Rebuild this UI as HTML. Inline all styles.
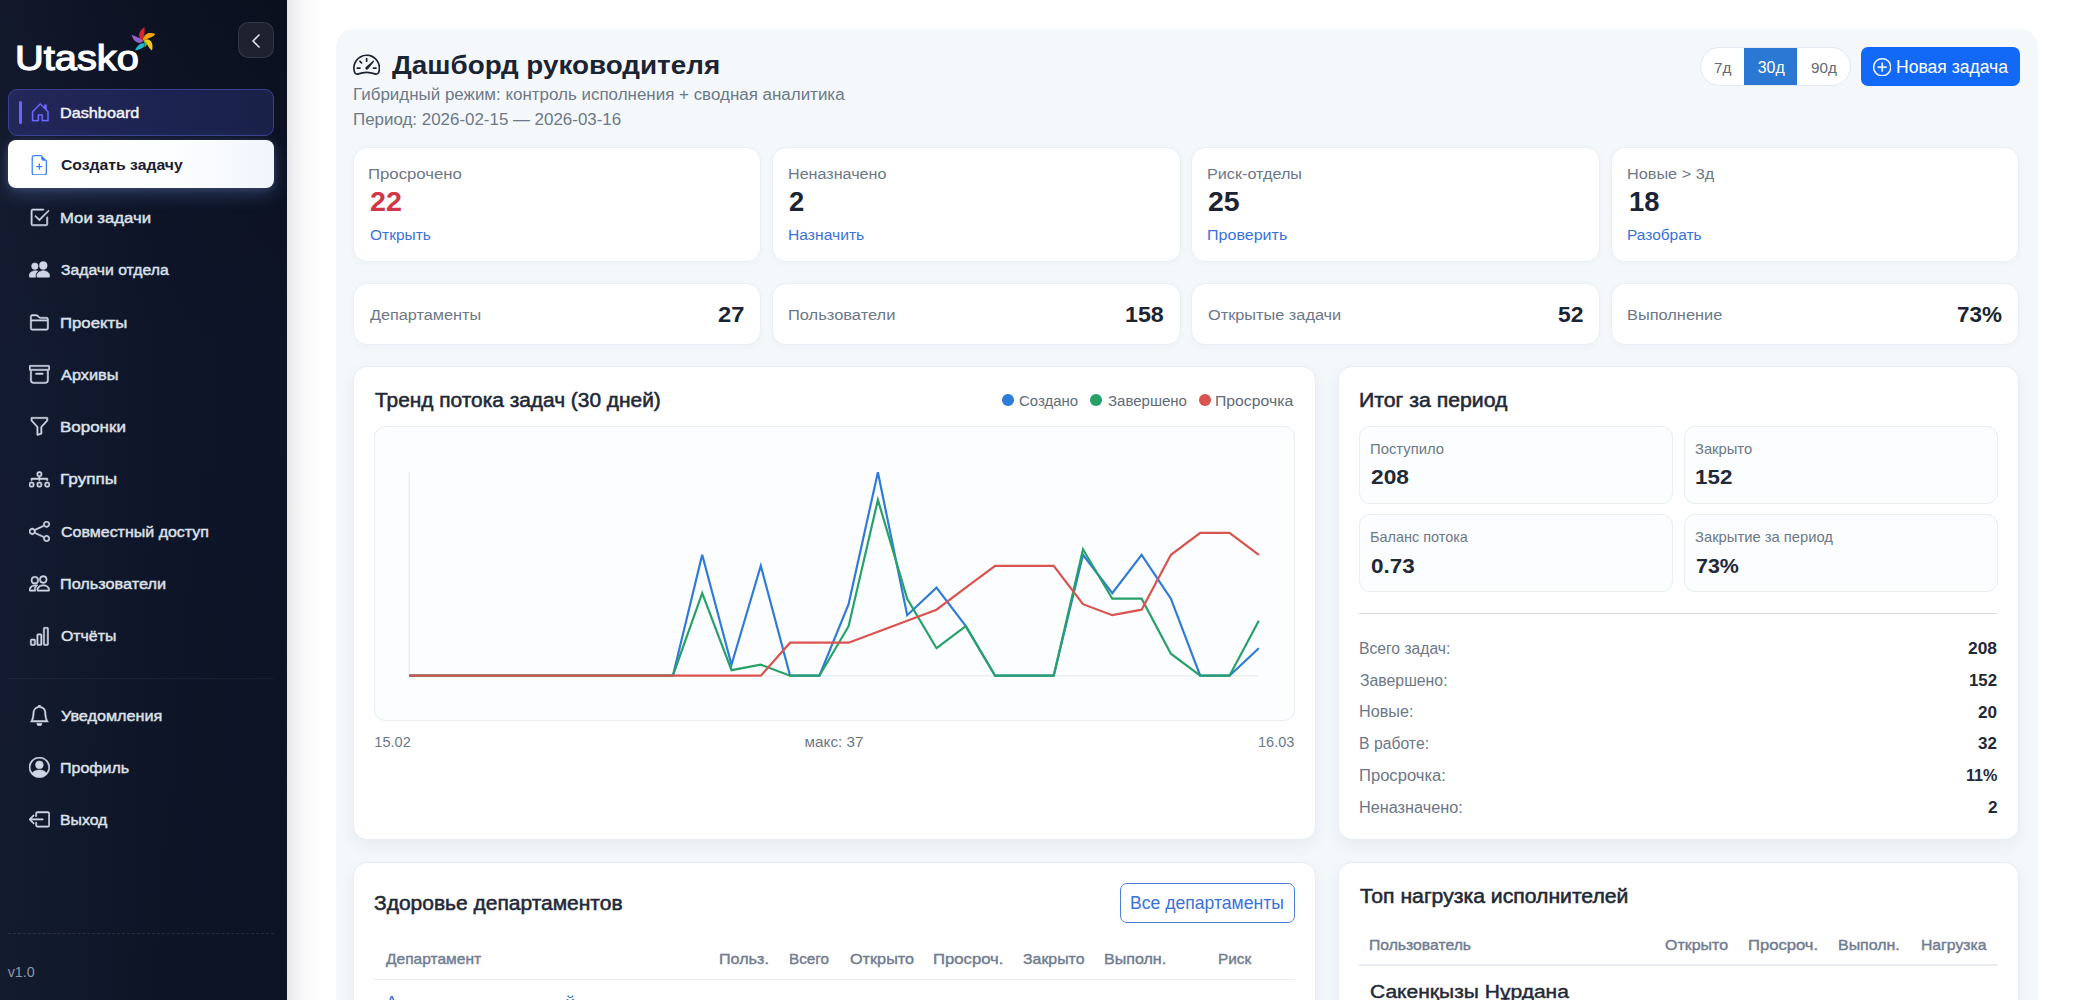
<!DOCTYPE html>
<html lang="ru"><head><meta charset="utf-8"><title>Utasko</title>
<style>
html,body{margin:0;padding:0}
body{width:2093px;height:1000px;overflow:hidden;position:relative;background:#fff;font-family:"Liberation Sans",sans-serif}
.b{position:absolute;box-sizing:border-box;display:block}
.t{position:absolute;white-space:pre;line-height:1;display:block;transform-origin:0 0}
#root{position:absolute;left:0;top:0;width:2093px;height:1000px;overflow:hidden;background:#fff}
</style></head><body>
<div id="root">
<div class="b" style="left:287px;top:0px;width:40px;height:1000px;background:linear-gradient(90deg,rgba(20,25,45,.11) 0,rgba(20,25,45,.06) 8px,rgba(20,25,45,.02) 20px,rgba(20,25,45,0) 34px)"></div>
<div class="b" style="left:0px;top:0px;width:287px;height:1000px;background:linear-gradient(90deg,rgba(44,54,84,.22) 0%,rgba(30,40,70,.08) 55%,rgba(10,14,28,.0) 100%),linear-gradient(180deg,#0b101f 0%,#0d1427 35%,#0c1324 100%)"></div>
<span class="t" style="left:15.36px;top:41.00px;font-size:35.6px;font-weight:400;color:#fff;transform:scaleX(1.1176);-webkit-text-stroke:1.25px #fff;">Utasko</span>
<svg class="b" style="left:129.2px;top:26px" width="28" height="28" viewBox="-14 -14 28 28">
<path d="M0.8 0.6 C2.8 1 4.2 2.2 4 4.2 C3.8 5.6 2.6 6.6 1.2 7 C2 4.6 1.6 2.4 0.2 1Z" fill="#4cb848"/>
<path d="M1.6 3.4 C2 6 0 8 -3 9 C-5 9.8 -6.5 10.3 -8 10.3 C-7 8 -5 5.4 -3 4.1 C-1.5 3.1 0 2.9 1.6 3.4Z" fill="#22b8d6"/>
<path d="M0.4 0.8 C-1 2.8 -3.5 3.6 -6 2.3 C-8.5 1 -10.6 -2 -11.4 -5.1 C-9 -4.9 -6 -3.3 -3.5 -1.9 C-2 -1.1 -0.8 -0.4 0.4 0.8Z" fill="#9560c8"/>
<path d="M0.4 0.4 C-3.4 -0.6 -4.9 -4.8 -3.2 -8 C-1.8 -10.4 -0.2 -12 1.5 -12.7 C1.9 -9 1.3 -4 0.4 0.4Z" fill="#d9232e"/>
<path d="M0 0.2 C0.4 -3.4 3 -6.7 6 -7 C8 -7.2 10.6 -6.9 12.1 -6.1 C11.8 -4.4 9 -2.9 6.5 -1.9 C4 -0.9 2 -0.2 0 0.2Z" fill="#f7a30c"/>
<path d="M0.6 0 C4 -1.6 7.6 -0.6 8.9 3 C9.7 5.5 9.7 8 9 10.3 C7 9.5 5.5 7 4.5 5 C3.5 3 2.2 1.2 0.6 0Z" fill="#f5c518"/>
</svg>
<div class="b" style="left:238px;top:22px;width:36px;height:36px;border-radius:10px;background:rgba(255,255,255,.07);border:1px solid rgba(255,255,255,.10)"></div>
<svg class="b" style="left:247.90px;top:33.00px;stroke:#e6eaf2;stroke-width:.7" width="16" height="16" viewBox="0 0 16 16" fill="#e6eaf2"><path fill-rule="evenodd" d="M11.354 1.646a.5.5 0 0 1 0 .708L5.707 8l5.647 5.646a.5.5 0 0 1-.708.708l-6-6a.5.5 0 0 1 0-.708l6-6a.5.5 0 0 1 .708 0z"/></svg>
<div class="b" style="left:8px;top:88.5px;width:266px;height:47px;border-radius:9px;background:linear-gradient(90deg,#23275a 0%,#1c2350 60%,#1a2148 100%);border:1px solid #3a3f8f"></div>
<div class="b" style="left:18.5px;top:100.5px;width:3.5px;height:23.5px;border-radius:2px;background:#6c63ff"></div>
<svg class="b" style="left:29.60px;top:101.90px;stroke:#6f68ff;stroke-width:.2" width="20.6" height="20.6" viewBox="0 0 16 16" fill="#6f68ff"><path d="M8.354 1.146a.5.5 0 0 0-.708 0l-6 6A.5.5 0 0 0 1.5 7.5v7a.5.5 0 0 0 .5.5h4.5a.5.5 0 0 0 .5-.5v-4h2v4a.5.5 0 0 0 .5.5H14a.5.5 0 0 0 .5-.5v-7a.5.5 0 0 0-.146-.354L13 5.793V2.5a.5.5 0 0 0-.5-.5h-1a.5.5 0 0 0-.5.5v1.293L8.354 1.146ZM2.5 14V7.707l5.5-5.5 5.5 5.5V14H10v-4a.5.5 0 0 0-.5-.5h-3a.5.5 0 0 0-.5.5v4H2.5Z"/></svg>
<span class="t" style="left:60.45px;top:105.00px;font-size:15.4px;font-weight:400;color:#f1f3f9;transform:scaleX(1.054);-webkit-text-stroke:.45px #f1f3f9;">Dashboard</span>
<div class="b" style="left:8px;top:140.2px;width:266px;height:47.9px;border-radius:8px;background:linear-gradient(90deg,#ffffff 0%,#fdfeff 60%,#f1f5fd 100%);box-shadow:0 6px 18px rgba(130,165,255,.26),0 1px 6px rgba(170,195,255,.16)"></div>
<svg class="b" style="left:29.30px;top:154.50px;" width="20.6" height="20.6" viewBox="0 0 16 16" fill="#3b82f6"><path d="M8 6.5a.5.5 0 0 1 .5.5v1.5H10a.5.5 0 0 1 0 1H8.5V11a.5.5 0 0 1-1 0V9.5H6a.5.5 0 0 1 0-1h1.5V7a.5.5 0 0 1 .5-.5z"/><path d="M14 4.5V14a2 2 0 0 1-2 2H4a2 2 0 0 1-2-2V2a2 2 0 0 1 2-2h5.5L14 4.5zm-3 0A1.5 1.5 0 0 1 9.5 3V1H4a1 1 0 0 0-1 1v12a1 1 0 0 0 1 1h8a1 1 0 0 0 1-1V4.5h-2z"/></svg>
<span class="t" style="left:61.10px;top:157.00px;font-size:15.4px;font-weight:700;color:#1a2030;transform:scaleX(1.0225);">Создать задачу</span>
<svg class="b" style="left:29.20px;top:207.10px;stroke:#cfd5e3;stroke-width:.42" width="20.8" height="20.8" viewBox="0 0 16 16" fill="#cfd5e3"><path d="M3 14.5A1.5 1.5 0 0 1 1.5 13V3A1.5 1.5 0 0 1 3 1.5h8a.5.5 0 0 1 0 1H3a.5.5 0 0 0-.5.5v10a.5.5 0 0 0 .5.5h10a.5.5 0 0 0 .5-.5V8a.5.5 0 0 1 1 0v5a1.5 1.5 0 0 1-1.5 1.5H3z"/><path d="m8.354 10.354 7-7a.5.5 0 0 0-.708-.708L8 9.293 5.354 6.646a.5.5 0 1 0-.708.708l3 3a.5.5 0 0 0 .708 0z"/></svg>
<span class="t" style="left:60.21px;top:210.00px;font-size:15.4px;font-weight:400;color:#dde1ea;transform:scaleX(1.0855);-webkit-text-stroke:.45px #dde1ea;">Мои задачи</span>
<svg class="b" style="left:29.20px;top:259.20px;stroke:#cfd5e3;stroke-width:.42" width="20.8" height="20.8" viewBox="0 0 16 16" fill="#cfd5e3"><path d="M7 14s-1 0-1-1 1-4 5-4 5 3 5 4-1 1-1 1H7Zm4-6a3 3 0 1 0 0-6 3 3 0 0 0 0 6Zm-5.784 6A2.238 2.238 0 0 1 5 13c0-1.355.68-2.75 1.936-3.72A6.325 6.325 0 0 0 5 9c-4 0-5 3-5 4s1 1 1 1h4.216ZM4.5 8a2.5 2.5 0 1 0 0-5 2.5 2.5 0 0 0 0 5Z"/></svg>
<span class="t" style="left:61.30px;top:262.00px;font-size:15.4px;font-weight:400;color:#dde1ea;transform:scaleX(1.0225);-webkit-text-stroke:.45px #dde1ea;">Задачи отдела</span>
<svg class="b" style="left:29.20px;top:311.60px;stroke:#cfd5e3;stroke-width:.42" width="20.8" height="20.8" viewBox="0 0 16 16" fill="#cfd5e3"><path d="M1 3.5A1.5 1.5 0 0 1 2.5 2h2.764c.958 0 1.76.56 2.311 1.184C7.985 3.648 8.48 4 9 4h4.5A1.5 1.5 0 0 1 15 5.5v7a1.5 1.5 0 0 1-1.5 1.5h-11A1.5 1.5 0 0 1 1 12.5v-9zM2.5 3a.5.5 0 0 0-.5.5V6h12v-.5a.5.5 0 0 0-.5-.5H9c-.964 0-1.71-.629-2.174-1.154C6.374 3.334 5.82 3 5.264 3H2.5zM14 7H2v5.5a.5.5 0 0 0 .5.5h11a.5.5 0 0 0 .5-.5V7z"/></svg>
<span class="t" style="left:60.21px;top:315.00px;font-size:15.4px;font-weight:400;color:#dde1ea;transform:scaleX(1.089);-webkit-text-stroke:.45px #dde1ea;">Проекты</span>
<svg class="b" style="left:29.20px;top:363.90px;stroke:#cfd5e3;stroke-width:.42" width="20.8" height="20.8" viewBox="0 0 16 16" fill="#cfd5e3"><path d="M0 2a1 1 0 0 1 1-1h14a1 1 0 0 1 1 1v2a1 1 0 0 1-1 1v7.5a2.5 2.5 0 0 1-2.5 2.5h-9A2.5 2.5 0 0 1 1 12.5V5a1 1 0 0 1-1-1V2zm2 3v7.5A1.5 1.5 0 0 0 3.5 14h9a1.5 1.5 0 0 0 1.5-1.5V5H2zm13-3H1v2h14V2zM5 7.5a.5.5 0 0 1 .5-.5h5a.5.5 0 0 1 0 1h-5a.5.5 0 0 1-.5-.5z"/></svg>
<span class="t" style="left:61.30px;top:367.00px;font-size:15.4px;font-weight:400;color:#dde1ea;transform:scaleX(1.061);-webkit-text-stroke:.45px #dde1ea;">Архивы</span>
<svg class="b" style="left:29.20px;top:416.20px;stroke:#cfd5e3;stroke-width:.42" width="20.8" height="20.8" viewBox="0 0 16 16" fill="#cfd5e3"><path d="M1.5 1.5A.5.5 0 0 1 2 1h12a.5.5 0 0 1 .5.5v2a.5.5 0 0 1-.128.334L10 8.692V13.5a.5.5 0 0 1-.342.474l-3 1A.5.5 0 0 1 6 14.5V8.692L1.628 3.834A.5.5 0 0 1 1.5 3.5v-2zm1 .5v1.308l4.372 4.858A.5.5 0 0 1 7 8.5v5.306l2-.666V8.5a.5.5 0 0 1 .128-.334L13.5 3.308V2h-11z"/></svg>
<span class="t" style="left:60.20px;top:419.00px;font-size:15.4px;font-weight:400;color:#dde1ea;transform:scaleX(1.1022);-webkit-text-stroke:.45px #dde1ea;">Воронки</span>
<svg class="b" style="left:29.20px;top:468.60px;stroke:#cfd5e3;stroke-width:.42" width="20.8" height="20.8" viewBox="0 0 16 16" fill="#cfd5e3"><path fill-rule="evenodd" d="M6 3.5A1.5 1.5 0 0 1 7.5 2h1A1.5 1.5 0 0 1 10 3.5v1A1.5 1.5 0 0 1 8.5 6v1H14a.5.5 0 0 1 .5.5v1a.5.5 0 0 1-1 0V8h-5v.5a.5.5 0 0 1-1 0V8h-5v.5a.5.5 0 0 1-1 0v-1A.5.5 0 0 1 2 7h5.5V6A1.5 1.5 0 0 1 6 4.5v-1zM8.5 5a.5.5 0 0 0 .5-.5v-1a.5.5 0 0 0-.5-.5h-1a.5.5 0 0 0-.5.5v1a.5.5 0 0 0 .5.5h1zM0 11.5A1.5 1.5 0 0 1 1.5 10h1A1.5 1.5 0 0 1 4 11.5v1A1.5 1.5 0 0 1 2.5 14h-1A1.5 1.5 0 0 1 0 12.5v-1zm1.5-.5a.5.5 0 0 0-.5.5v1a.5.5 0 0 0 .5.5h1a.5.5 0 0 0 .5-.5v-1a.5.5 0 0 0-.5-.5h-1zm4.5.5A1.5 1.5 0 0 1 7.5 10h1a1.5 1.5 0 0 1 1.5 1.5v1A1.5 1.5 0 0 1 8.5 14h-1A1.5 1.5 0 0 1 6 12.5v-1zm1.5-.5a.5.5 0 0 0-.5.5v1a.5.5 0 0 0 .5.5h1a.5.5 0 0 0 .5-.5v-1a.5.5 0 0 0-.5-.5h-1zm4.5.5a1.5 1.5 0 0 1 1.5-1.5h1a1.5 1.5 0 0 1 1.5 1.5v1a1.5 1.5 0 0 1-1.5 1.5h-1a1.5 1.5 0 0 1-1.5-1.5v-1zm1.5-.5a.5.5 0 0 0-.5.5v1a.5.5 0 0 0 .5.5h1a.5.5 0 0 0 .5-.5v-1a.5.5 0 0 0-.5-.5h-1z"/></svg>
<span class="t" style="left:60.19px;top:471.00px;font-size:15.4px;font-weight:400;color:#dde1ea;transform:scaleX(1.1138);-webkit-text-stroke:.45px #dde1ea;">Группы</span>
<svg class="b" style="left:29.20px;top:521.00px;stroke:#cfd5e3;stroke-width:.42" width="20.8" height="20.8" viewBox="0 0 16 16" fill="#cfd5e3"><path d="M13.5 1a1.5 1.5 0 1 0 0 3 1.5 1.5 0 0 0 0-3zM11 2.5a2.5 2.5 0 1 1 .603 1.628l-6.718 3.12a2.499 2.499 0 0 1 0 1.504l6.718 3.12a2.5 2.5 0 1 1-.488.876l-6.718-3.12a2.5 2.5 0 1 1 0-3.256l6.718-3.12A2.5 2.5 0 0 1 11 2.5zm-8.5 4a1.5 1.5 0 1 0 0 3 1.5 1.5 0 0 0 0-3zm11 5.5a1.5 1.5 0 1 0 0 3 1.5 1.5 0 0 0 0-3z"/></svg>
<span class="t" style="left:61.30px;top:524.00px;font-size:15.4px;font-weight:400;color:#dde1ea;transform:scaleX(1.0387);-webkit-text-stroke:.45px #dde1ea;">Совместный доступ</span>
<svg class="b" style="left:29.20px;top:573.20px;stroke:#cfd5e3;stroke-width:.42" width="20.8" height="20.8" viewBox="0 0 16 16" fill="#cfd5e3"><path d="M15 14s1 0 1-1-1-4-5-4-5 3-5 4 1 1 1 1h8Zm-7.978-1A.261.261 0 0 1 7 12.996c.001-.264.167-1.03.76-1.72C8.312 10.629 9.282 10 11 10c1.717 0 2.687.63 3.24 1.276.593.69.758 1.457.76 1.72l-.008.002a.274.274 0 0 1-.014.002H7.022ZM11 7a2 2 0 1 0 0-4 2 2 0 0 0 0 4Zm3-2a3 3 0 1 1-6 0 3 3 0 0 1 6 0ZM6.936 9.28a5.88 5.88 0 0 0-1.23-.247A7.35 7.35 0 0 0 5 9c-4 0-5 3-5 4 0 .667.333 1 1 1h4.216A2.238 2.238 0 0 1 5 13c0-1.01.377-2.042 1.09-2.904.243-.294.526-.569.846-.816ZM4.92 10A5.493 5.493 0 0 0 4 13H1c0-.26.164-1.03.76-1.724.545-.636 1.492-1.256 3.16-1.275ZM1.5 5.5a3 3 0 1 1 6 0 3 3 0 0 1-6 0Zm3-2a2 2 0 1 0 0 4 2 2 0 0 0 0-4Z"/></svg>
<span class="t" style="left:60.25px;top:576.00px;font-size:15.4px;font-weight:400;color:#dde1ea;transform:scaleX(1.0547);-webkit-text-stroke:.45px #dde1ea;">Пользователи</span>
<svg class="b" style="left:29.20px;top:625.60px;stroke:#cfd5e3;stroke-width:.42" width="20.8" height="20.8" viewBox="0 0 16 16" fill="#cfd5e3"><path d="M4 11H2v3h2v-3zm5-4H7v7h2V7zm5-5v12h-2V2h2zm-2-1a1 1 0 0 0-1 1v12a1 1 0 0 0 1 1h2a1 1 0 0 0 1-1V2a1 1 0 0 0-1-1h-2zM6 7a1 1 0 0 1 1-1h2a1 1 0 0 1 1 1v7a1 1 0 0 1-1 1H7a1 1 0 0 1-1-1V7zm-5 4a1 1 0 0 1 1-1h2a1 1 0 0 1 1 1v3a1 1 0 0 1-1 1H2a1 1 0 0 1-1-1v-3z"/></svg>
<span class="t" style="left:61.30px;top:628.00px;font-size:15.4px;font-weight:400;color:#dde1ea;transform:scaleX(1.0294);-webkit-text-stroke:.45px #dde1ea;">Отчёты</span>
<svg class="b" style="left:29.20px;top:704.90px;stroke:#cfd5e3;stroke-width:.42" width="20.8" height="20.8" viewBox="0 0 16 16" fill="#cfd5e3"><path d="M8 16a2 2 0 0 0 2-2H6a2 2 0 0 0 2 2zM8 1.918l-.797.161A4.002 4.002 0 0 0 4 6c0 .628-.134 2.197-.459 3.742-.16.767-.376 1.566-.663 2.258h10.244c-.287-.692-.502-1.49-.663-2.258C12.134 8.197 12 6.628 12 6a4.002 4.002 0 0 0-3.203-3.92L8 1.917zM14.22 12c.223.447.481.801.78 1H1c.299-.199.557-.553.78-1C2.68 10.2 3 6.88 3 6c0-2.42 1.72-4.44 4.005-4.901a1 1 0 1 1 1.99 0A5.002 5.002 0 0 1 13 6c0 .88.32 4.2 1.22 6z"/></svg>
<span class="t" style="left:61.30px;top:708.00px;font-size:15.4px;font-weight:400;color:#dde1ea;transform:scaleX(1.0533);-webkit-text-stroke:.45px #dde1ea;">Уведомления</span>
<svg class="b" style="left:29.20px;top:757.10px;stroke:#cfd5e3;stroke-width:.42" width="20.8" height="20.8" viewBox="0 0 16 16" fill="#cfd5e3"><path d="M11 6a3 3 0 1 1-6 0 3 3 0 0 1 6 0z"/><path fill-rule="evenodd" d="M0 8a8 8 0 1 1 16 0A8 8 0 0 1 0 8zm8-7a7 7 0 0 0-5.468 11.37C3.242 11.226 4.805 10 8 10s4.757 1.225 5.468 2.37A7 7 0 0 0 8 1z"/></svg>
<span class="t" style="left:60.26px;top:760.00px;font-size:15.4px;font-weight:400;color:#dde1ea;transform:scaleX(1.04);-webkit-text-stroke:.45px #dde1ea;">Профиль</span>
<svg class="b" style="left:29.20px;top:809.40px;stroke:#cfd5e3;stroke-width:.42" width="20.8" height="20.8" viewBox="0 0 16 16" fill="#cfd5e3"><path fill-rule="evenodd" d="M6 12.5a.5.5 0 0 0 .5.5h8a.5.5 0 0 0 .5-.5v-9a.5.5 0 0 0-.5-.5h-8a.5.5 0 0 0-.5.5v2a.5.5 0 0 1-1 0v-2A1.5 1.5 0 0 1 6.5 2h8A1.5 1.5 0 0 1 16 3.5v9a1.5 1.5 0 0 1-1.5 1.5h-8A1.5 1.5 0 0 1 5 12.5v-2a.5.5 0 0 1 1 0v2z"/><path fill-rule="evenodd" d="M.146 8.354a.5.5 0 0 1 0-.708l3-3a.5.5 0 1 1 .708.708L1.707 7.5H10.5a.5.5 0 0 1 0 1H1.707l2.147 2.146a.5.5 0 0 1-.708.708l-3-3z"/></svg>
<span class="t" style="left:60.27px;top:812.00px;font-size:15.4px;font-weight:400;color:#dde1ea;transform:scaleX(1.0282);-webkit-text-stroke:.45px #dde1ea;">Выход</span>
<div class="b" style="left:8px;top:677.5px;width:266px;height:1px;background:rgba(255,255,255,.045)"></div>
<div class="b" style="left:8px;top:933px;width:266px;height:0px;border-top:1px dashed rgba(255,255,255,.10)"></div>
<span class="t" style="left:7.70px;top:965.00px;font-size:14.35px;font-weight:400;color:#8c95a8;">v1.0</span>
<div class="b" style="left:335.5px;top:28.8px;width:1702px;height:990px;border-radius:18px;background:#f4f8fb"></div>
<svg class="b" style="left:352.75px;top:50.65px;" width="27.3" height="27.3" viewBox="0 0 16 16" fill="#1b2433"><path d="M8 4a.5.5 0 0 1 .5.5V6a.5.5 0 0 1-1 0V4.5A.5.5 0 0 1 8 4zM3.732 5.732a.5.5 0 0 1 .707 0l.915.914a.5.5 0 1 1-.708.708l-.914-.915a.5.5 0 0 1 0-.707zM2 10a.5.5 0 0 1 .5-.5h1.586a.5.5 0 0 1 0 1H2.5A.5.5 0 0 1 2 10zm9.5 0a.5.5 0 0 1 .5-.5h1.5a.5.5 0 0 1 0 1H12a.5.5 0 0 1-.5-.5zm.754-4.246a.389.389 0 0 0-.527-.02L7.547 9.31a.91.91 0 1 0 1.302 1.258l3.434-4.297a.389.389 0 0 0-.029-.518z"/><path fill-rule="evenodd" d="M0 10a8 8 0 1 1 15.547 2.661c-.442 1.253-1.845 1.602-2.932 1.25C11.309 13.488 9.475 13 8 13c-1.474 0-3.31.488-4.615.911-1.087.352-2.49.003-2.932-1.25A7.988 7.988 0 0 1 0 10zm8-7a7 7 0 0 0-6.603 9.329c.203.575.923.876 1.68.63C4.397 12.533 6.358 12 8 12s3.604.532 4.923.96c.757.245 1.477-.056 1.68-.631A7 7 0 0 0 8 3z"/></svg>
<span class="t" style="left:391.70px;top:52.00px;font-size:26.2px;font-weight:700;color:#1b2433;transform:scaleX(1.0623);">Дашборд руководителя</span>
<span class="t" style="left:352.52px;top:86.00px;font-size:17.3px;font-weight:400;color:#6c7888;transform:scaleX(0.9807);">Гибридный режим: контроль исполнения + сводная аналитика</span>
<span class="t" style="left:352.52px;top:111.00px;font-size:17.3px;font-weight:400;color:#6c7888;transform:scaleX(0.9791);">Период: 2026-02-15 — 2026-03-16</span>
<div class="b" style="left:1700px;top:47px;width:151px;height:38.5px;border-radius:20px;background:#fff;border:1px solid #e2e8ef;overflow:hidden"></div>
<div class="b" style="left:1744px;top:48px;width:53px;height:36.5px;background:#2b77d4"></div>
<span class="t" style="left:1714.10px;top:60.00px;font-size:15.24px;font-weight:400;color:#5f6b7a;">7д</span>
<span class="t" style="left:1757.70px;top:60.00px;font-size:15.92px;font-weight:400;color:#fff;">30д</span>
<span class="t" style="left:1811.00px;top:60.00px;font-size:15.28px;font-weight:400;color:#5f6b7a;">90д</span>
<div class="b" style="left:1861.3px;top:46.9px;width:158.3px;height:38.8px;border-radius:7px;background:#1369f7"></div>
<svg class="b" style="left:1872.80px;top:58.00px;stroke:#fff;stroke-width:.35" width="18.4" height="18.4" viewBox="0 0 16 16" fill="#fff"><path d="M8 15A7 7 0 1 1 8 1a7 7 0 0 1 0 14zm0 1A8 8 0 1 0 8 0a8 8 0 0 0 0 16z"/><path d="M8 4a.5.5 0 0 1 .5.5v3h3a.5.5 0 0 1 0 1h-3v3a.5.5 0 0 1-1 0v-3h-3a.5.5 0 0 1 0-1h3v-3A.5.5 0 0 1 8 4z"/></svg>
<span class="t" style="left:1896.00px;top:59.00px;font-size:17.55px;font-weight:400;color:#fff;">Новая задача</span>
<div class="b" style="left:352.8px;top:146.9px;width:408.6px;height:115.3px;background:#fff;border:1px solid #eaeff5;border-radius:14px;box-shadow:0 2px 6px rgba(30,50,80,.03)"></div>
<span class="t" style="left:368.39px;top:166.00px;font-size:15.1px;font-weight:400;color:#6c7888;transform:scaleX(1.1096);">Просрочено</span>
<span class="t" style="left:369.50px;top:188.00px;font-size:28px;font-weight:700;color:#d23546;transform:scaleX(1.0242);">22</span>
<span class="t" style="left:369.50px;top:227.00px;font-size:15.1px;font-weight:400;color:#3873d9;transform:scaleX(1.0262);">Открыть</span>
<div class="b" style="left:772.0999999999999px;top:146.9px;width:408.6px;height:115.3px;background:#fff;border:1px solid #eaeff5;border-radius:14px;box-shadow:0 2px 6px rgba(30,50,80,.03)"></div>
<span class="t" style="left:788.33px;top:166.00px;font-size:15.1px;font-weight:400;color:#6c7888;transform:scaleX(1.068);">Неназначено</span>
<span class="t" style="left:789.40px;top:188.00px;font-size:28px;font-weight:700;color:#1b2433;transform:scaleX(0.9767);">2</span>
<span class="t" style="left:788.36px;top:227.00px;font-size:15.1px;font-weight:400;color:#3873d9;transform:scaleX(1.0374);">Назначить</span>
<div class="b" style="left:1191.3999999999999px;top:146.9px;width:408.6px;height:115.3px;background:#fff;border:1px solid #eaeff5;border-radius:14px;box-shadow:0 2px 6px rgba(30,50,80,.03)"></div>
<span class="t" style="left:1207.13px;top:166.00px;font-size:15.1px;font-weight:400;color:#6c7888;transform:scaleX(1.073);">Риск-отделы</span>
<span class="t" style="left:1208.20px;top:188.00px;font-size:28px;font-weight:700;color:#1b2433;transform:scaleX(1.0145);">25</span>
<span class="t" style="left:1207.14px;top:227.00px;font-size:15.1px;font-weight:400;color:#3873d9;transform:scaleX(1.0639);">Проверить</span>
<div class="b" style="left:1610.7px;top:146.9px;width:408.6px;height:115.3px;background:#fff;border:1px solid #eaeff5;border-radius:14px;box-shadow:0 2px 6px rgba(30,50,80,.03)"></div>
<span class="t" style="left:1626.62px;top:166.00px;font-size:15.1px;font-weight:400;color:#6c7888;transform:scaleX(1.0769);">Новые &gt; 3д</span>
<span class="t" style="left:1628.62px;top:188.00px;font-size:28px;font-weight:700;color:#1b2433;transform:scaleX(0.978);">18</span>
<span class="t" style="left:1626.67px;top:227.00px;font-size:15.1px;font-weight:400;color:#3873d9;transform:scaleX(1.0251);">Разобрать</span>
<div class="b" style="left:352.8px;top:283.4px;width:408.6px;height:61.3px;background:#fff;border:1px solid #eaeff5;border-radius:14px;box-shadow:0 2px 6px rgba(30,50,80,.03)"></div>
<span class="t" style="left:369.50px;top:307.00px;font-size:15.1px;font-weight:400;color:#6c7888;transform:scaleX(1.0757);">Департаменты</span>
<span class="t" style="left:718.42px;top:304.00px;font-size:22.4px;font-weight:700;color:#1b2433;transform:scaleX(1.0583);">27</span>
<div class="b" style="left:772.0999999999999px;top:283.4px;width:408.6px;height:61.3px;background:#fff;border:1px solid #eaeff5;border-radius:14px;box-shadow:0 2px 6px rgba(30,50,80,.03)"></div>
<span class="t" style="left:788.31px;top:307.00px;font-size:15.1px;font-weight:400;color:#6c7888;transform:scaleX(1.0902);">Пользователи</span>
<span class="t" style="left:1125.48px;top:304.00px;font-size:22.4px;font-weight:700;color:#1b2433;transform:scaleX(1.0383);">158</span>
<div class="b" style="left:1191.3999999999999px;top:283.4px;width:408.6px;height:61.3px;background:#fff;border:1px solid #eaeff5;border-radius:14px;box-shadow:0 2px 6px rgba(30,50,80,.03)"></div>
<span class="t" style="left:1208.20px;top:307.00px;font-size:15.1px;font-weight:400;color:#6c7888;transform:scaleX(1.0802);">Открытые задачи</span>
<span class="t" style="left:1557.66px;top:304.00px;font-size:22.4px;font-weight:700;color:#1b2433;transform:scaleX(1.0199);">52</span>
<div class="b" style="left:1610.7px;top:283.4px;width:408.6px;height:61.3px;background:#fff;border:1px solid #eaeff5;border-radius:14px;box-shadow:0 2px 6px rgba(30,50,80,.03)"></div>
<span class="t" style="left:1626.62px;top:307.00px;font-size:15.1px;font-weight:400;color:#6c7888;transform:scaleX(1.0844);">Выполнение</span>
<span class="t" style="left:1957.10px;top:304.00px;font-size:22.4px;font-weight:700;color:#1b2433;transform:scaleX(1.0021);">73%</span>
<div class="b" style="left:352.8px;top:366.4px;width:963.3px;height:473.2px;background:#fff;border:1px solid #e9eef3;border-radius:14px;box-shadow:0 6px 16px rgba(20,40,80,.055)"></div>
<span class="t" style="left:375.40px;top:390.00px;font-size:20.2px;font-weight:400;color:#1f2937;transform:scaleX(1.0339);-webkit-text-stroke:.55px #1f2937;">Тренд потока задач (30 дней)</span>
<span class="t" style="left:1215.39px;top:394.00px;font-size:14.9px;font-weight:400;color:#5f6b7a;transform:scaleX(1.0586);">Просрочка</span>
<span class="t" style="left:1107.84px;top:394.00px;font-size:14.9px;font-weight:400;color:#5f6b7a;transform:scaleX(1.008);">Завершено</span>
<span class="t" style="left:1019.03px;top:394.00px;font-size:14.9px;font-weight:400;color:#5f6b7a;transform:scaleX(1.0035);">Создано</span>
<div class="b" style="left:1002.2px;top:394.1px;width:11.6px;height:11.6px;border-radius:50%;background:#2f7bd9"></div>
<div class="b" style="left:1090.2px;top:394.1px;width:11.6px;height:11.6px;border-radius:50%;background:#26a269"></div>
<div class="b" style="left:1199.4px;top:394.1px;width:11.6px;height:11.6px;border-radius:50%;background:#d9534f"></div>
<div class="b" style="left:374.1px;top:425.8px;width:920.9px;height:294.9px;background:#fbfdfe;border:1px solid #e9eff4;border-radius:11px"></div>
<svg class="b" style="left:0;top:0" width="2093" height="1000" viewBox="0 0 2093 1000" fill="none">
<path d="M409.2 472.3V675.7H1258.8" stroke="#e3e9ef" stroke-width="1.1"/>
<polyline points="409.2,675.7 438.5,675.7 467.8,675.7 497.1,675.7 526.4,675.7 555.7,675.7 585.0,675.7 614.3,675.7 643.6,675.7 672.9,675.7 702.2,554.8 731.5,664.7 760.8,565.8 790.1,675.7 819.4,675.7 848.6,604.2 877.9,472.3 907.2,615.2 936.5,587.7 965.8,626.2 995.1,675.7 1024.4,675.7 1053.7,675.7 1083.0,554.8 1112.3,593.2 1141.6,554.8 1170.9,598.7 1200.2,675.7 1229.5,675.7 1258.8,648.2" stroke="#2f7bd9" stroke-width="2.2" stroke-linejoin="miter" stroke-linecap="butt"/>
<polyline points="409.2,675.7 438.5,675.7 467.8,675.7 497.1,675.7 526.4,675.7 555.7,675.7 585.0,675.7 614.3,675.7 643.6,675.7 672.9,675.7 702.2,593.2 731.5,670.2 760.8,664.7 790.1,675.7 819.4,675.7 848.6,626.2 877.9,499.8 907.2,598.7 936.5,648.2 965.8,626.2 995.1,675.7 1024.4,675.7 1053.7,675.7 1083.0,549.3 1112.3,598.7 1141.6,598.7 1170.9,653.7 1200.2,675.7 1229.5,675.7 1258.8,620.7" stroke="#26a269" stroke-width="2.2" stroke-linejoin="miter" stroke-linecap="butt"/>
<polyline points="409.2,675.7 438.5,675.7 467.8,675.7 497.1,675.7 526.4,675.7 555.7,675.7 585.0,675.7 614.3,675.7 643.6,675.7 672.9,675.7 702.2,675.7 731.5,675.7 760.8,675.7 790.1,642.7 819.4,642.7 848.6,642.7 877.9,631.7 907.2,620.7 936.5,609.7 965.8,587.7 995.1,565.8 1024.4,565.8 1053.7,565.8 1083.0,604.2 1112.3,615.2 1141.6,609.7 1170.9,554.8 1200.2,532.8 1229.5,532.8 1258.8,554.8" stroke="#d9534f" stroke-width="2.2" stroke-linejoin="miter" stroke-linecap="butt"/>
</svg>
<span class="t" style="left:374.30px;top:735.00px;font-size:14.58px;font-weight:400;color:#6c7888;">15.02</span>
<span class="t" style="left:804.61px;top:734.00px;font-size:15.26px;font-weight:400;color:#6c7888;">макс: 37</span>
<span class="t" style="left:1258.05px;top:735.00px;font-size:14.52px;font-weight:400;color:#6c7888;">16.03</span>
<div class="b" style="left:1337.7px;top:366.4px;width:681.3px;height:473.2px;background:#fff;border:1px solid #e9eef3;border-radius:14px;box-shadow:0 6px 16px rgba(20,40,80,.055)"></div>
<span class="t" style="left:1359.15px;top:390.00px;font-size:20.2px;font-weight:400;color:#1f2937;transform:scaleX(1.0528);-webkit-text-stroke:.55px #1f2937;">Итог за период</span>
<div class="b" style="left:1359.2px;top:426.1px;width:313.6px;height:77.6px;background:#fbfdfe;border:1px solid #e9eff4;border-radius:11px"></div>
<span class="t" style="left:1369.88px;top:442.00px;font-size:14.6px;font-weight:400;color:#6c7888;transform:scaleX(1.015);">Поступило</span>
<span class="t" style="left:1370.90px;top:467.00px;font-size:20.3px;font-weight:700;color:#1f2937;transform:scaleX(1.1213);">208</span>
<div class="b" style="left:1683.5px;top:426.1px;width:314.1px;height:77.6px;background:#fbfdfe;border:1px solid #e9eff4;border-radius:11px"></div>
<span class="t" style="left:1695.20px;top:442.00px;font-size:14.6px;font-weight:400;color:#6c7888;transform:scaleX(1.0105);">Закрыто</span>
<span class="t" style="left:1695.30px;top:467.00px;font-size:20.3px;font-weight:700;color:#1f2937;transform:scaleX(1.1028);">152</span>
<div class="b" style="left:1359.2px;top:514.3px;width:313.6px;height:77.6px;background:#fbfdfe;border:1px solid #e9eff4;border-radius:11px"></div>
<span class="t" style="left:1369.91px;top:530.00px;font-size:14.6px;font-weight:400;color:#6c7888;transform:scaleX(0.9895);">Баланс потока</span>
<span class="t" style="left:1370.90px;top:556.00px;font-size:20.3px;font-weight:700;color:#1f2937;transform:scaleX(1.1083);">0.73</span>
<div class="b" style="left:1683.5px;top:514.3px;width:314.1px;height:77.6px;background:#fbfdfe;border:1px solid #e9eff4;border-radius:11px"></div>
<span class="t" style="left:1695.20px;top:530.00px;font-size:14.6px;font-weight:400;color:#6c7888;transform:scaleX(1.0117);">Закрытие за период</span>
<span class="t" style="left:1696.40px;top:556.00px;font-size:20.3px;font-weight:700;color:#1f2937;transform:scaleX(1.0551);">73%</span>
<div class="b" style="left:1359.2px;top:613.2px;width:638.3px;height:1.2px;background:#d6dadf"></div>
<span class="t" style="left:1358.70px;top:641.00px;font-size:15.6px;font-weight:400;color:#6c7888;transform:scaleX(1.004);">Всего задач:</span>
<span class="t" style="left:1968.31px;top:641.00px;font-size:16px;font-weight:700;color:#1f2937;transform:scaleX(1.0854);">208</span>
<span class="t" style="left:1359.70px;top:673.00px;font-size:15.6px;font-weight:400;color:#6c7888;transform:scaleX(1.0137);">Завершено:</span>
<span class="t" style="left:1969.28px;top:673.00px;font-size:16px;font-weight:700;color:#1f2937;transform:scaleX(1.0494);">152</span>
<span class="t" style="left:1358.66px;top:704.00px;font-size:15.6px;font-weight:400;color:#6c7888;transform:scaleX(1.0374);">Новые:</span>
<span class="t" style="left:1978.26px;top:705.00px;font-size:16px;font-weight:700;color:#1f2937;transform:scaleX(1.0694);">20</span>
<span class="t" style="left:1358.69px;top:736.00px;font-size:15.6px;font-weight:400;color:#6c7888;transform:scaleX(1.0102);">В работе:</span>
<span class="t" style="left:1978.44px;top:736.00px;font-size:16px;font-weight:700;color:#1f2937;transform:scaleX(1.0593);">32</span>
<span class="t" style="left:1358.64px;top:768.00px;font-size:15.6px;font-weight:400;color:#6c7888;transform:scaleX(1.0637);">Просрочка:</span>
<span class="t" style="left:1966.15px;top:768.00px;font-size:16px;font-weight:700;color:#1f2937;transform:scaleX(1.0109);">11%</span>
<span class="t" style="left:1358.66px;top:800.00px;font-size:15.6px;font-weight:400;color:#6c7888;transform:scaleX(1.0426);">Неназначено:</span>
<span class="t" style="left:1987.76px;top:800.00px;font-size:16px;font-weight:700;color:#1f2937;transform:scaleX(1.0714);">2</span>
<div class="b" style="left:352.8px;top:861.7px;width:963.3px;height:200px;background:#fff;border:1px solid #e9eef3;border-radius:14px;box-shadow:0 6px 16px rgba(20,40,80,.055)"></div>
<span class="t" style="left:374.30px;top:893.00px;font-size:20.2px;font-weight:400;color:#1f2937;transform:scaleX(1.0393);-webkit-text-stroke:.55px #1f2937;">Здоровье департаментов</span>
<div class="b" style="left:1119.6px;top:883.4px;width:175.1px;height:39.4px;border:1px solid #4d7fd6;border-radius:7px;background:#fff"></div>
<span class="t" style="left:1129.90px;top:895.00px;font-size:17.61px;font-weight:400;color:#3873d9;">Все департаменты</span>
<span class="t" style="left:385.50px;top:951.00px;font-size:15.0px;font-weight:400;color:#707c90;transform:scaleX(1.0359);-webkit-text-stroke:.4px #707c90;">Департамент</span>
<span class="t" style="left:719.22px;top:951.00px;font-size:15.0px;font-weight:400;color:#707c90;transform:scaleX(1.0754);-webkit-text-stroke:.4px #707c90;">Польз.</span>
<span class="t" style="left:788.88px;top:951.00px;font-size:15.0px;font-weight:400;color:#707c90;transform:scaleX(1.0163);-webkit-text-stroke:.4px #707c90;">Всего</span>
<span class="t" style="left:850.00px;top:951.00px;font-size:15.0px;font-weight:400;color:#707c90;transform:scaleX(1.0804);-webkit-text-stroke:.4px #707c90;">Открыто</span>
<span class="t" style="left:933.09px;top:951.00px;font-size:15.0px;font-weight:400;color:#707c90;transform:scaleX(1.1121);-webkit-text-stroke:.4px #707c90;">Просроч.</span>
<span class="t" style="left:1023.10px;top:951.00px;font-size:15.0px;font-weight:400;color:#707c90;transform:scaleX(1.0571);-webkit-text-stroke:.4px #707c90;">Закрыто</span>
<span class="t" style="left:1104.33px;top:951.00px;font-size:15.0px;font-weight:400;color:#707c90;transform:scaleX(1.07);-webkit-text-stroke:.4px #707c90;">Выполн.</span>
<span class="t" style="left:1218.38px;top:951.00px;font-size:15.0px;font-weight:400;color:#707c90;transform:scaleX(1.0212);-webkit-text-stroke:.4px #707c90;">Риск</span>
<div class="b" style="left:374px;top:979px;width:920.6px;height:1.3px;background:#e8ecf1"></div>
<span class="t" style="left:385.90px;top:994.00px;font-size:17px;font-weight:400;color:#3873d9;">А</span>
<span class="t" style="left:565.50px;top:994.00px;font-size:17px;font-weight:400;color:#3873d9;">й</span>
<div class="b" style="left:1337.7px;top:861.7px;width:681.3px;height:200px;background:#fff;border:1px solid #e9eef3;border-radius:14px;box-shadow:0 6px 16px rgba(20,40,80,.055)"></div>
<span class="t" style="left:1359.80px;top:886.00px;font-size:20.2px;font-weight:400;color:#1f2937;transform:scaleX(1.049);-webkit-text-stroke:.55px #1f2937;">Топ нагрузка исполнителей</span>
<span class="t" style="left:1369.35px;top:937.00px;font-size:15.0px;font-weight:400;color:#707c90;transform:scaleX(1.0479);-webkit-text-stroke:.4px #707c90;">Пользователь</span>
<span class="t" style="left:1664.70px;top:937.00px;font-size:15.0px;font-weight:400;color:#707c90;transform:scaleX(1.0632);-webkit-text-stroke:.4px #707c90;">Открыто</span>
<span class="t" style="left:1747.79px;top:937.00px;font-size:15.0px;font-weight:400;color:#707c90;transform:scaleX(1.1072);-webkit-text-stroke:.4px #707c90;">Просроч.</span>
<span class="t" style="left:1838.34px;top:937.00px;font-size:15.0px;font-weight:400;color:#707c90;transform:scaleX(1.0628);-webkit-text-stroke:.4px #707c90;">Выполн.</span>
<span class="t" style="left:1920.75px;top:937.00px;font-size:15.0px;font-weight:400;color:#707c90;transform:scaleX(1.0491);-webkit-text-stroke:.4px #707c90;">Нагрузка</span>
<div class="b" style="left:1359.3px;top:964.3px;width:638.2px;height:1.3px;background:#e8ecf1"></div>
<span class="t" style="left:1369.90px;top:984.00px;font-size:17.6px;font-weight:400;color:#1f2937;transform:scaleX(1.1949);-webkit-text-stroke:.4px #1f2937;">Сакенқызы Нұрдана</span>
</div>
</body></html>
